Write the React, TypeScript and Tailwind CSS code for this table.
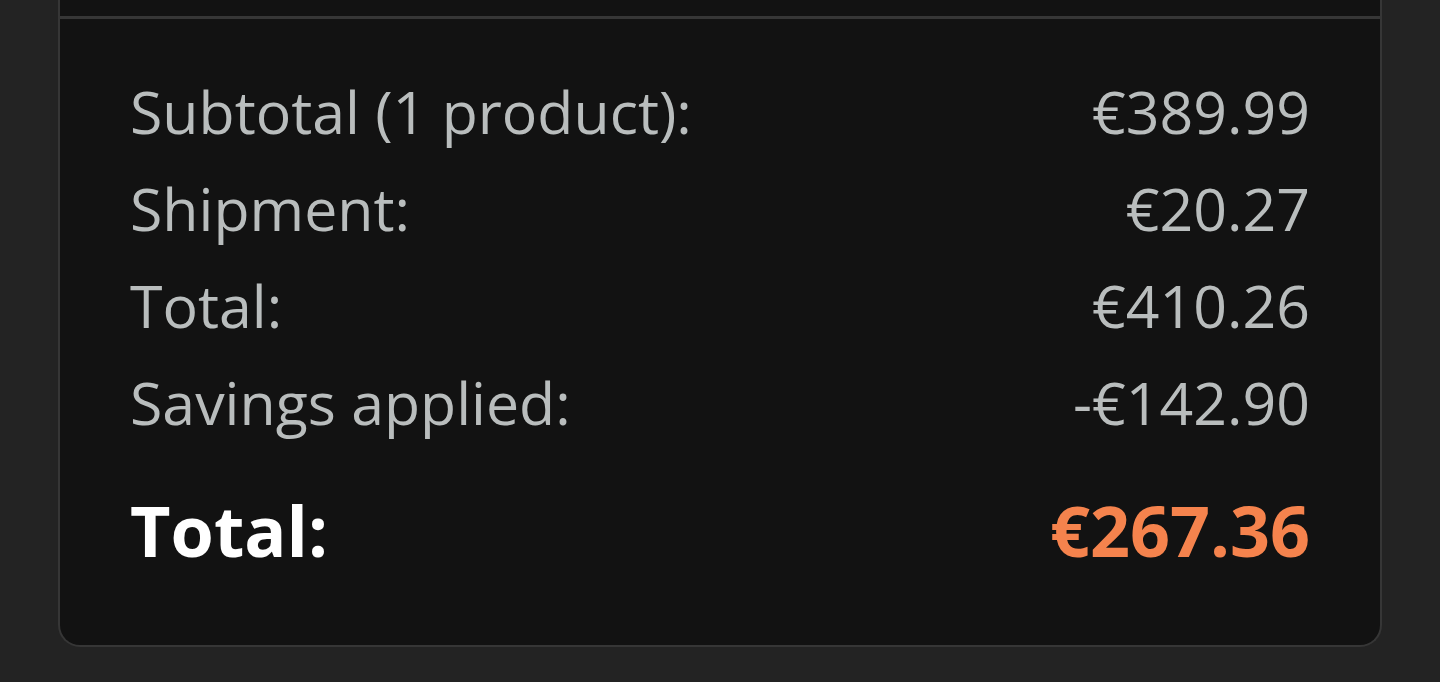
export default function App() {
  const rows: [string, string][] = [
    ["Subtotal (1 product):", "€389.99"],
    ["Shipment:", "€20.27"],
    ["Total:", "€410.26"],
    ["Savings applied:", "-€142.90"],
  ];
  return (
    <div
      className="w-full h-[682px] bg-[#232323] px-[58px] overflow-hidden"
      style={{ fontFamily: '"Open Sans", "Noto Sans", sans-serif' }}
    >
      <div className="bg-[#121212] border-x-2 border-b-2 border-[#363636] rounded-b-[22px]">
        <div className="h-[16px]" />
        <div className="border-t-[3px] border-[#363636] px-[70px] pt-[44px] pb-[66px]">
          {rows.map(([l, r]) => (
            <div key={l} className="flex justify-between text-[59px] leading-[97px] text-[#b9bdbd]">
              <span>{l}</span>
              <span>{r}</span>
            </div>
          ))}
          <div className="flex justify-between text-[70px] leading-[97px] font-bold mt-[31px]">
            <span className="text-white">Total:</span>
            <span className="text-[#f5834d]">€267.36</span>
          </div>
        </div>
      </div>
    </div>
  );
}
